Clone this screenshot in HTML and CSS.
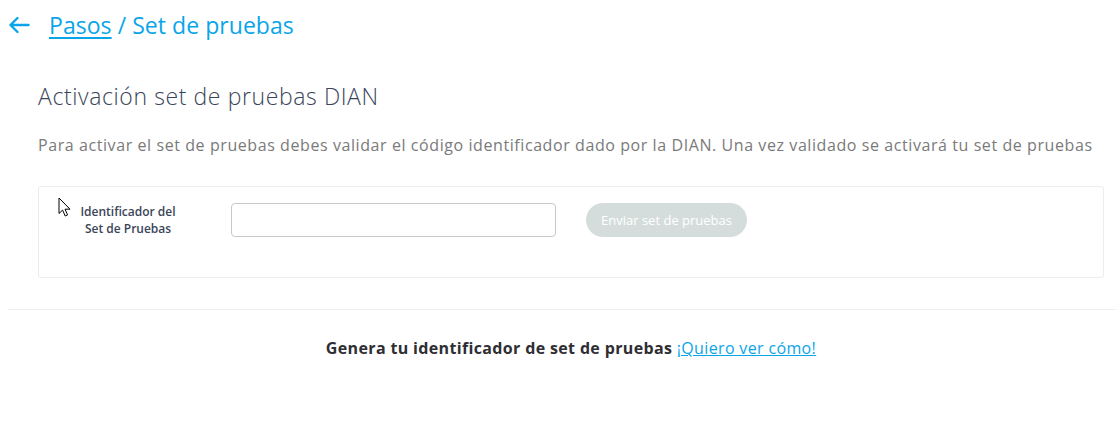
FILE: index.html
```html
<!DOCTYPE html>
<html lang="es">
<head>
<meta charset="utf-8">
<title>Set de pruebas</title>
<link rel="stylesheet" href="styles.css">
</head>
<body>
<header class="topbar">
  <a class="back" href="#" aria-label="Volver">
    <svg width="22" height="18" viewBox="0 0 22 18"><path d="M20.5 9H2.5M9.5 2L2.5 9l7 7" fill="none" stroke="#0aa5e8" stroke-width="2.4" stroke-linecap="round" stroke-linejoin="round"/></svg>
  </a>
  <h1 class="crumbs"><a href="#" class="crumb-link">Pasos</a> / Set de pruebas</h1>
</header>
<main class="content">
  <h2 class="title">Activación set de pruebas DIAN</h2>
  <p class="desc">Para activar el set de pruebas debes validar el código identificador dado por la DIAN. Una vez validado se activará tu set de pruebas</p>
  <section class="card">
    <label class="field-label" for="ident">Identificador del<br>Set de Pruebas</label>
    <input id="ident" class="field-input" type="text">
    <button class="send-btn" disabled>Enviar set de pruebas</button>
    <svg class="cursor" width="13" height="20" viewBox="0 0 13 20"><path d="M1 1v15.5l3.6-3.4 2.6 5.9 2.4-1.1-2.6-5.7H12z" fill="#fff" stroke="#000" stroke-width="1" stroke-linejoin="round"/></svg>
  </section>
</main>
<hr class="divider">
<p class="footer-note">Genera tu identificador de set de pruebas <a href="#" class="how-link">¡Quiero ver cómo!</a></p>
</body>
</html>
```
FILE: styles.css
```css
* { box-sizing: border-box; }
body {
  margin: 0;
  font-family: "Open Sans", "Noto Sans", sans-serif;
  background: #fff;
  color: #3b4559;
}
.topbar {
  display: flex;
  align-items: center;
  height: 50px;
  padding-left: 8px;
}
.back { display: flex; width: 41px; }
.crumbs {
  margin: 0;
  font-size: 23px;
  font-weight: 400;
  color: #0aa5e8;
  letter-spacing: 0.05px;
}
.crumb-link { color: #0aa5e8; text-decoration: underline; text-underline-offset: 3px; }
.content { padding: 31px 12px 0 38px; }
.title {
  margin: 0;
  font-size: 23px;
  font-weight: 300;
  color: #3b4559;
  line-height: 30px;
  letter-spacing: 0.6px;
}
.desc {
  margin: 22px 0 0;
  font-size: 16px;
  color: #7a7a7a;
  line-height: 24px;
  white-space: nowrap;
  letter-spacing: 0.58px;
}
.card {
  position: relative;
  margin-top: 29px;
  height: 92px;
  border: 1px solid #ececec;
  border-radius: 3px;
  display: flex;
  align-items: flex-start;
  padding-top: 16px;
}
.field-label {
  width: 178px;
  text-align: center;
  font-size: 12px;
  font-weight: 600;
  line-height: 17px;
  color: #3b4559;
  padding-top: 0;
}
.field-input {
  margin-left: 14px;
  width: 325px;
  height: 34px;
  border: 1px solid #c9c9c9;
  border-radius: 4px;
  background: #fff;
}
.send-btn {
  margin-left: 30px;
  width: 161px;
  height: 34px;
  border: none;
  border-radius: 17px;
  background: #d5dddc;
  color: #fff;
  font-family: inherit;
  font-size: 13px;
}
.cursor { position: absolute; left: 19px; top: 10px; }
.divider {
  margin: 31px 0 0 8px;
  border: none;
  border-top: 1px solid #efefef;
}
.footer-note {
  margin: 27px 0 0;
  padding-left: 26px;
  text-align: center;
  font-size: 16px;
  font-weight: 700;
  color: #2e2e33;
  letter-spacing: 0.35px;
}
.how-link { font-weight: 400; color: #0aa5e8; text-decoration: underline; }
```
